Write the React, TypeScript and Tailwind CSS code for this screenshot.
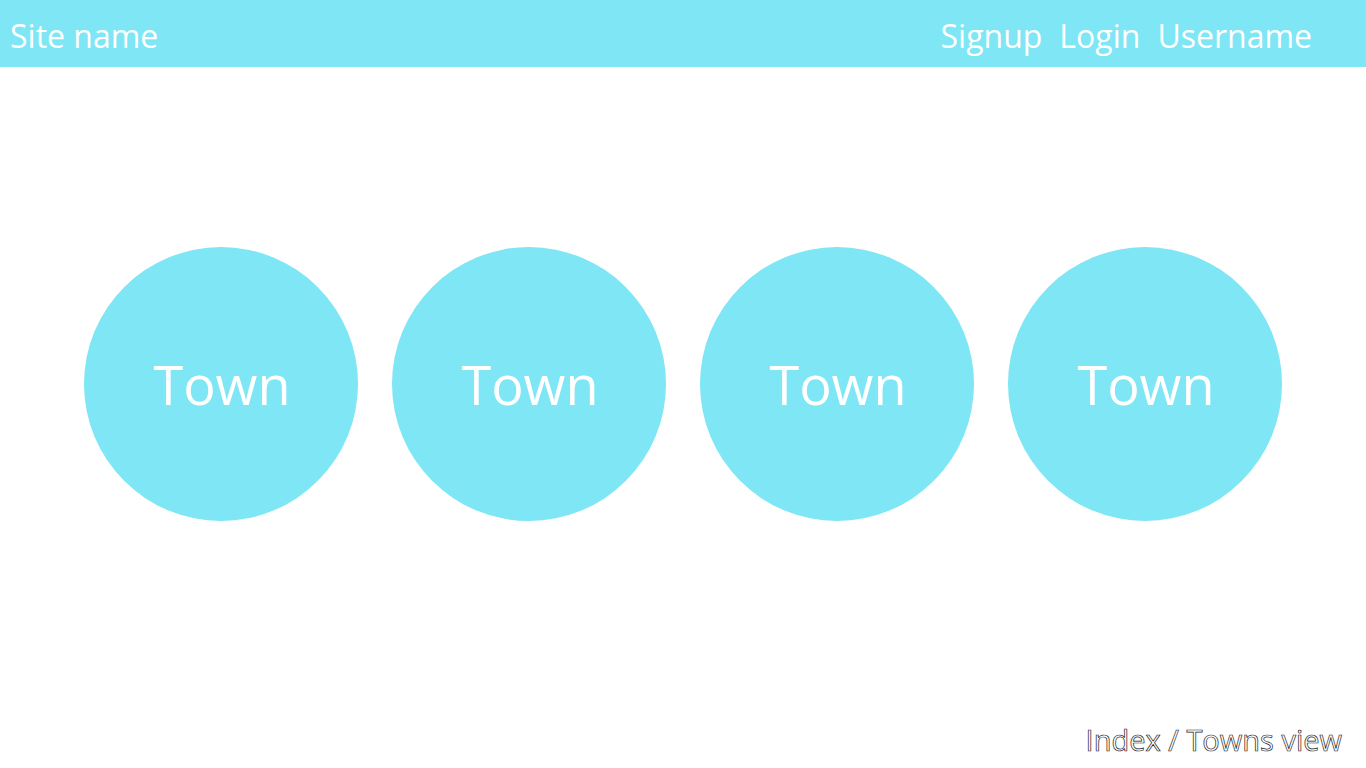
import React from 'react';

const towns = ['Town', 'Town', 'Town', 'Town'];

export default function App() {
  return (
    <div className="h-[768px] flex flex-col bg-white font-['Open_Sans',sans-serif]">
      {/* Header */}
      <header className="h-[67px] bg-[#7ee6f4] flex items-center justify-between pl-[10px] pr-[54px] pt-[4px] text-white text-[32px]">
        <span>Site name</span>
        <nav className="flex items-center gap-[17px]">
          <span>Signup</span>
          <span>Login</span>
          <span>Username</span>
        </nav>
      </header>

      {/* Towns */}
      <main className="pt-[180px] flex justify-center gap-[34px]">
        {towns.map((town, i) => (
          <div
            key={i}
            className="w-[274px] h-[274px] rounded-full bg-[#7ee6f4] flex items-center justify-center text-white text-[54px] pl-[2px]"
          >
            {town}
          </div>
        ))}
      </main>

      {/* View label */}
      <footer className="mt-auto flex justify-end pr-[24px] pb-[7px]">
        <span className="text-[29px] text-white [-webkit-text-stroke:0.7px_#222]">
          Index / Towns view
        </span>
      </footer>
    </div>
  );
}
